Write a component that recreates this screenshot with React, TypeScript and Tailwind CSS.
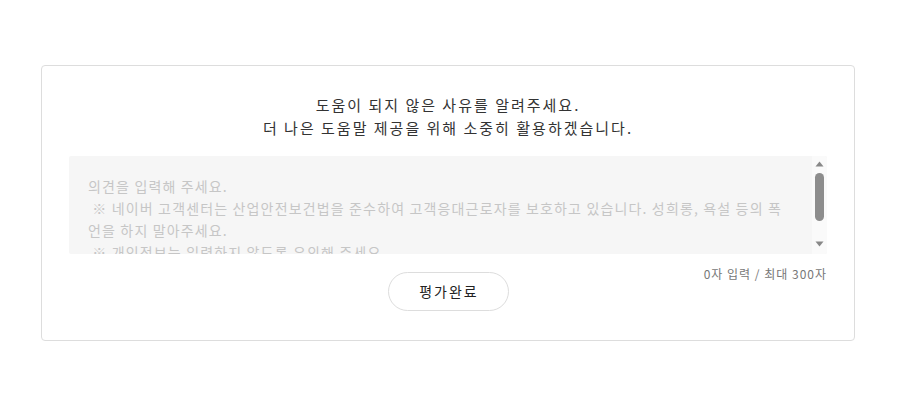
import { useState } from "react";

const PLACEHOLDER =
    "의견을 입력해 주세요.\n ※ 네이버 고객센터는 산업안전보건법을 준수하여 고객응대근로자를 보호하고 있습니다. 성희롱, 욕설 등의 폭언을 하지 말아주세요.\n ※ 개인정보는 입력하지 않도록 유의해 주세요.";

const App = () => {
    const [text, setText] = useState("");

    return (
        <main className="w-full min-h-screen bg-white pt-[65px] pl-[41px] font-['Noto_Sans_CJK_KR','Noto_Sans',sans-serif]">
            {/* Feedback card */}
            <section className="w-[814px] rounded-[4px] border border-[#dddddd] bg-white px-[27px] pt-[27px] pb-[29px]">
                <p className="text-center text-[15px] leading-[23px] tracking-[2px] text-[#333333]">
                    도움이 되지 않은 사유를 알려주세요.
                    <br />
                    더 나은 도움말 제공을 위해 소중히 활용하겠습니다.
                </p>

                {/* Textarea with classic scrollbar */}
                <div className="mt-[17px] flex h-[98px] overflow-hidden rounded-[2px] bg-[#f6f6f6]">
                    <textarea
                        value={text}
                        onChange={(e) => setText(e.target.value.slice(0, 300))}
                        placeholder={PLACEHOLDER}
                        className="block h-full flex-1 resize-none overflow-hidden bg-transparent pl-[19px] pr-[20px] pt-[19px] text-[14px] leading-[22px] tracking-[1.15px] text-[#333333] outline-none placeholder:text-[#c6c6c6]"
                    />
                    <div className="flex w-[15px] flex-col items-center bg-[#fafafa] pt-[5px] pb-[7px]">
                        <svg width="9" height="6" viewBox="0 0 9 6">
                            <path d="M4.5 0.5 L8.5 5.5 L0.5 5.5 Z" fill="#888888" />
                        </svg>
                        <div className="mt-[6px] h-[48px] w-[9px] rounded-full bg-[#8d8d8d]" />
                        <div className="flex-1" />
                        <svg width="9" height="6" viewBox="0 0 9 6">
                            <path d="M0.5 0.5 L8.5 0.5 L4.5 5.5 Z" fill="#888888" />
                        </svg>
                    </div>
                </div>

                <div className="grid grid-cols-[1fr_auto_1fr]">
                    <div />
                    <button className="mt-[18px] h-[39px] w-[121px] rounded-full border border-[#dddddd] bg-white pl-[2px] text-[14px] tracking-[2px] text-[#222222]">
                        평가완료
                    </button>
                    <span className="mt-[12px] self-start justify-self-end text-[12px] leading-[16px] tracking-[1px] text-[#777777]">
                        {text.length}자 입력 / 최대 300자
                    </span>
                </div>
            </section>
        </main>
    );
};

export default App;
